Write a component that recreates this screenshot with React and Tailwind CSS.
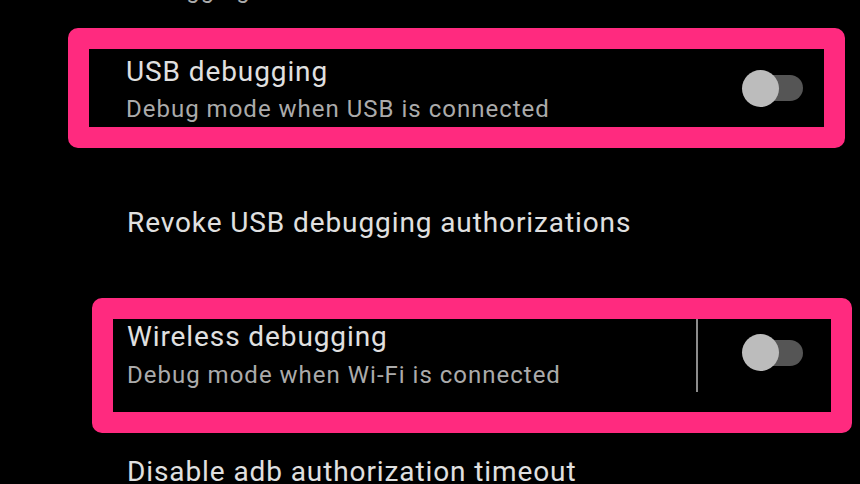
import React from "react";

function Toggle() {
  return (
    <div className="relative w-[61px] h-[37px] shrink-0">
      <div className="absolute right-0 top-[5.5px] w-[50px] h-[26px] rounded-full bg-[#555555]" />
      <div className="absolute left-0 top-0 w-[37px] h-[37px] rounded-full bg-[#bcbcbc]" />
    </div>
  );
}

export default function App() {
  const font = { fontFamily: "Roboto, 'Noto Sans', sans-serif" };
  return (
    <div
      className="w-[860px] h-[484px] overflow-hidden bg-black flex flex-col"
      style={font}
    >
      <div className="mt-[-26px] h-[32px] pl-[127px] text-[24px] leading-[32px] tracking-[1px] text-[#ababab] shrink-0">
        Debugging
      </div>

      <div className="mt-[22px] ml-[68px] w-[777px] h-[120px] shrink-0 border-[21px] border-[#ff2a7f] rounded-[10px] flex pl-[37px] pr-[21px]">
        <div className="flex-1 pt-[5px] flex flex-col">
          <div className="text-[28px] leading-[36px] tracking-[0.9px] text-[#e0e0e0]">USB debugging</div>
          <div className="mt-[1px] text-[24px] leading-[36px] tracking-[1px] text-[#ababab]">
            Debug mode when USB is connected
          </div>
        </div>
        <div className="self-center">
          <Toggle />
        </div>
      </div>

      <div className="h-[150px] shrink-0 flex items-center pl-[127px]">
        <div className="text-[28px] leading-[36px] tracking-[0.9px] text-[#e0e0e0]">
          Revoke USB debugging authorizations
        </div>
      </div>

      <div className="ml-[92px] w-[760px] h-[135px] shrink-0 border-[21px] border-[#ff2a7f] rounded-[10px] flex pl-[14px]">
        <div className="flex-1 flex flex-col">
          <div className="text-[28px] leading-[36px] tracking-[0.9px] text-[#e0e0e0]">Wireless debugging</div>
          <div className="mt-[2px] text-[24px] leading-[36px] tracking-[1px] text-[#ababab]">
            Debug mode when Wi-Fi is connected
          </div>
        </div>
        <div className="w-[2px] h-[73px] bg-[#8c8c8c] shrink-0" />
        <div className="ml-[44px] mt-[15px] mr-[28px]">
          <Toggle />
        </div>
      </div>

      <div className="mt-[21px] pl-[127px] text-[28px] leading-[36px] tracking-[0.9px] text-[#e0e0e0] shrink-0">
        Disable adb authorization timeout
      </div>
    </div>
  );
}
